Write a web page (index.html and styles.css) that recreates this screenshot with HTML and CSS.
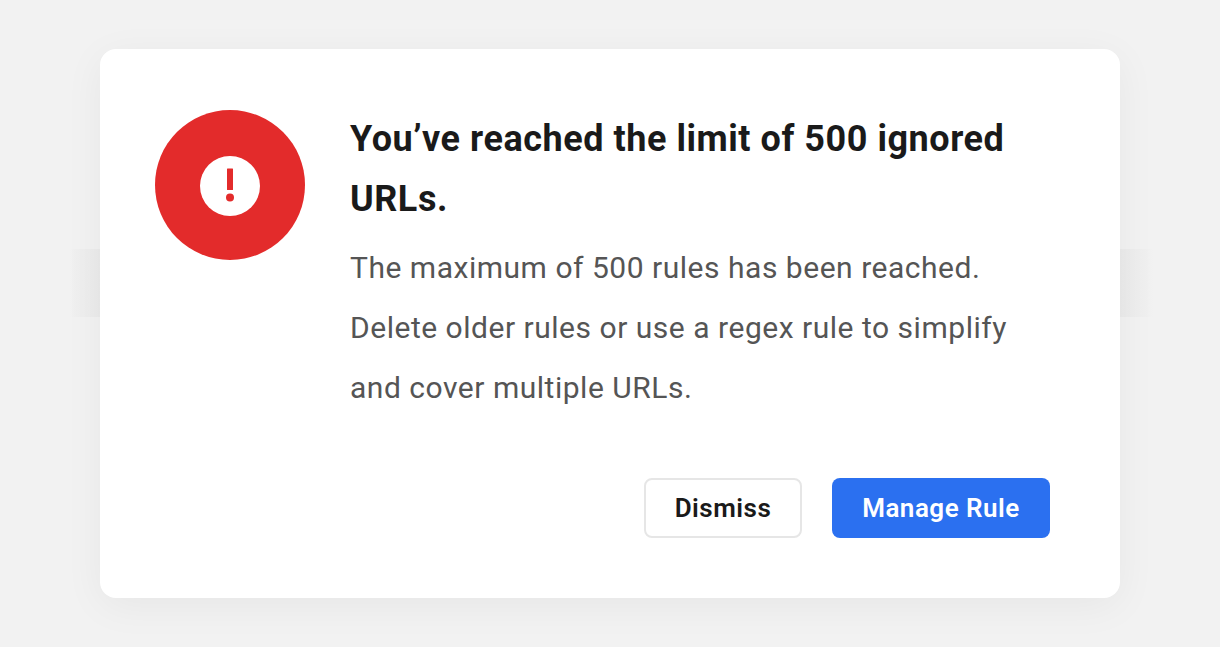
FILE: index.html

```html
<!doctype html>
<html lang="en">
  <head>
    <meta charset="UTF-8" />
    <title>Ignored URLs limit</title>
    <link rel="stylesheet" href="styles.css">
  </head>
  <body>
    <div class="backdrop-row"></div>
    <div class="dialog">
      <div class="dialog-main">
        <div class="alert-icon">
          <svg width="60" height="60" viewBox="0 0 60 60">
            <circle cx="30" cy="30" r="30" fill="#fff" />
            <rect x="27" y="12.5" width="6" height="21.5" rx="0.5" fill="#e32b2b" />
            <circle cx="30" cy="41.5" r="4" fill="#e32b2b" />
          </svg>
        </div>
        <div class="dialog-text">
          <h1>You’ve reached the limit of 500 ignored URLs.</h1>
          <p>The maximum of 500 rules has been reached. Delete older rules or use a regex rule to simplify and cover multiple URLs.</p>
        </div>
      </div>
      <div class="dialog-actions">
        <button class="btn btn-dismiss">Dismiss</button>
        <button class="btn btn-primary">Manage Rule</button>
      </div>
    </div>
  </body>
</html>
```

FILE: styles.css

```css
* {
  box-sizing: border-box;
  padding: 0;
  margin: 0;
}

html,
body {
  height: 100%;
}

body {
  display: flex;
  align-items: flex-start;
  justify-content: center;
  position: relative;
  overflow: hidden;
  font-family: Roboto, sans-serif;
  background: #f2f2f2;
}

.backdrop-row {
  position: absolute;
  top: 249px;
  left: 70px;
  width: 1084px;
  height: 68px;
  background: linear-gradient(to right, #f2f2f2, #efefef 6px, #ebebeb 30px, #ebebeb calc(100% - 34px), #efefef calc(100% - 10px), #f2f2f2);
}

.dialog {
  position: relative;
  width: 1020px;
  margin-top: 49px;
  padding: 61px 70px 60px 55px;
  border-radius: 16px;
  background: #fff;
  box-shadow: 0 8px 40px rgba(0, 0, 0, 0.05);
}

.dialog-main {
  display: flex;
  gap: 45px;
}

.alert-icon {
  display: flex;
  flex: none;
  align-items: center;
  justify-content: center;
  width: 150px;
  height: 150px;
  border-radius: 50%;
  background: #e32b2b;
}

.alert-icon svg {
  margin-top: 1px;
}

.dialog-text {
  flex: 1;
  margin-top: -1px;
}

h1 {
  font-size: 36px;
  font-weight: 700;
  line-height: 60px;
  letter-spacing: 0.54px;
  color: #1a1a1a;
}

p {
  margin-top: 9px;
  font-size: 30px;
  font-weight: 400;
  line-height: 60px;
  letter-spacing: 0.52px;
  color: #555;
}

.dialog-actions {
  display: flex;
  justify-content: flex-end;
  gap: 30px;
  margin-top: 60px;
}

.btn {
  height: 60px;
  border-radius: 8px;
  font-family: inherit;
  font-size: 26px;
  font-weight: 600;
  letter-spacing: 0.5px;
}

.btn-dismiss {
  width: 158px;
  border: 2px solid #e6e6e6;
  color: #1a1a1a;
  background: #fff;
}

.btn-primary {
  width: 218px;
  border: 0;
  color: #fff;
  background: #2b70f0;
}
```
